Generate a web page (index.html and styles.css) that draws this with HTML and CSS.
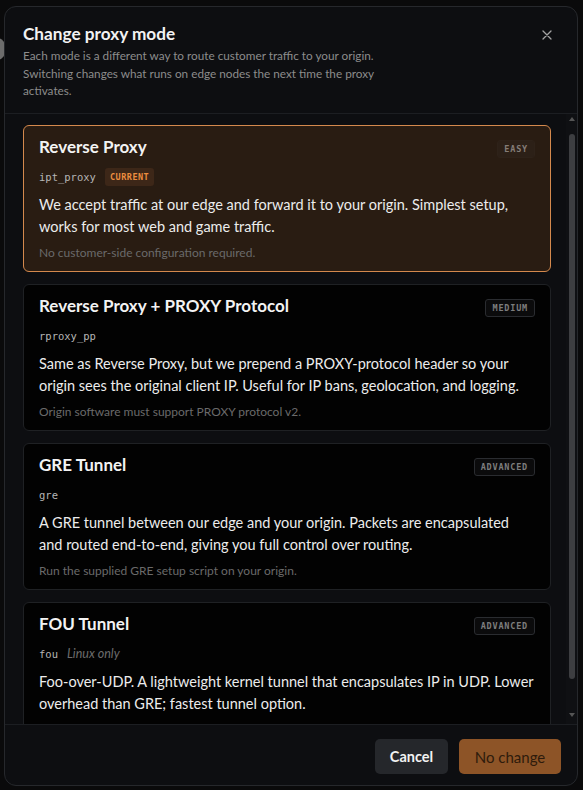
FILE: index.html
```html
<!DOCTYPE html>
<html lang="en">
<head>
  <meta charset="UTF-8" />
  <meta name="viewport" content="width=device-width, initial-scale=1.0" />
  <title>Change proxy mode</title>
  <link rel="stylesheet" href="styles.css">
</head>
<body>

  <div class="page-avatar"></div>

  <div class="modal">
    <header class="modal-head">
      <div class="head-text">
        <h2>Change proxy mode</h2>
        <p>Each mode is a different way to route customer traffic to your origin. Switching changes what runs on edge nodes the next time the proxy activates.</p>
      </div>
      <button class="close-btn" aria-label="Close">
        <svg width="10" height="10" viewBox="0 0 10 10"><path d="M1 1L9 9M9 1L1 9" stroke="#a3a3a3" stroke-width="1.3" stroke-linecap="round"/></svg>
      </button>
    </header>

    <div class="modal-body">
      <div class="mode-list">

        <div class="mode-card selected">
          <div class="mode-top">
            <h3>Reverse Proxy</h3>
            <span class="level level-easy">EASY</span>
          </div>
          <div class="mode-code">
            <code>ipt_proxy</code>
            <span class="current">CURRENT</span>
          </div>
          <p class="mode-desc">We accept traffic at our edge and forward it to your origin. Simplest setup, works for most web and game traffic.</p>
          <p class="mode-note">No customer-side configuration required.</p>
        </div>

        <div class="mode-card">
          <div class="mode-top">
            <h3>Reverse Proxy + PROXY Protocol</h3>
            <span class="level">MEDIUM</span>
          </div>
          <div class="mode-code">
            <code>rproxy_pp</code>
          </div>
          <p class="mode-desc">Same as Reverse Proxy, but we prepend a PROXY-protocol header so your origin sees the original client IP. Useful for IP bans, geolocation, and logging.</p>
          <p class="mode-note">Origin software must support PROXY protocol v2.</p>
        </div>

        <div class="mode-card">
          <div class="mode-top">
            <h3>GRE Tunnel</h3>
            <span class="level">ADVANCED</span>
          </div>
          <div class="mode-code">
            <code>gre</code>
          </div>
          <p class="mode-desc">A GRE tunnel between our edge and your origin. Packets are encapsulated and routed end-to-end, giving you full control over routing.</p>
          <p class="mode-note">Run the supplied GRE setup script on your origin.</p>
        </div>

        <div class="mode-card">
          <div class="mode-top">
            <h3>FOU Tunnel</h3>
            <span class="level">ADVANCED</span>
          </div>
          <div class="mode-code">
            <code>fou</code>
            <span class="os-note">Linux only</span>
          </div>
          <p class="mode-desc">Foo-over-UDP. A lightweight kernel tunnel that encapsulates IP in UDP. Lower overhead than GRE; fastest tunnel option.</p>
        </div>

      </div>

      <div class="scrollbar">
        <span class="arrow arrow-up"></span>
        <span class="thumb"></span>
        <span class="arrow arrow-down"></span>
      </div>
    </div>

    <footer class="modal-foot">
      <button class="btn btn-cancel">Cancel</button>
      <button class="btn btn-confirm">No change</button>
    </footer>
  </div>

</body>
</html>
```

FILE: styles.css
```css
* {
  box-sizing: border-box;
}

body {
  margin: 0;
  height: 790px;
  padding: 6px 5px 4px 4px;
  background: #0a0a0b;
  font-family: Lato, "Noto Sans", sans-serif;
  color: #e8e8e8;
  overflow: hidden;
}

/* faint page content behind the overlay */
.page-avatar {
  position: absolute;
  left: -12px;
  top: 38px;
  width: 18px;
  height: 22px;
  border-radius: 50%;
  background: #6c6c6c;
}

.modal {
  position: relative;
  height: 780px;
  display: flex;
  flex-direction: column;
  background: #0d0e11;
  border: 1px solid #26282c;
  border-radius: 12px;
  overflow: hidden;
}

.modal-head {
  display: flex;
  justify-content: space-between;
  align-items: flex-start;
  padding: 15px 18px 13px 18px;
  border-bottom: 1px solid #1c1e22;
}

.modal-head h2 {
  margin: 0;
  font-size: 17.2px;
  line-height: 24px;
  font-weight: 700;
  color: #f2f2f2;
}

.modal-head p {
  margin: 1px 0 0;
  max-width: 364px;
  font-size: 11.75px;
  line-height: 17.5px;
  color: #8c8c8c;
}

.close-btn {
  width: 24px;
  height: 24px;
  margin-top: 1px;
  padding: 0;
  border: none;
  background: none;
  display: flex;
  align-items: center;
  justify-content: center;
}

.modal-body {
  flex: 1;
  min-height: 0;
  display: flex;
}

.mode-list {
  flex: 1;
  overflow: hidden;
  display: flex;
  flex-direction: column;
  gap: 12px;
  padding: 11px 15px 0 18px;
}

.mode-card {
  flex-shrink: 0;
  min-height: 147px;
  padding: 10px 15px 9px 15px;
  background: #020202;
  border: 1px solid #1f2124;
  border-radius: 6px;
}

.mode-card.selected {
  background: #291c12;
  border-color: #d4894d;
}

.mode-top {
  display: flex;
  justify-content: space-between;
  align-items: center;
  height: 22px;
}

.mode-top h3 {
  margin: 0;
  font-size: 17px;
  font-weight: 700;
  color: #f3f3f3;
}

.level {
  margin-top: 4px;
  padding: 0 6px;
  height: 18px;
  line-height: 17px;
  font-family: "DejaVu Sans Mono", monospace;
  font-size: 8.5px;
  letter-spacing: 0.8px;
  font-weight: 700;
  color: #7d7d7d;
  background: #0b0b0c;
  border: 1px solid #2a2c30;
  border-radius: 3px;
}

.level-easy {
  background: #2c2017;
  border-color: #2e2219;
  color: #857d77;
}

.mode-code {
  display: flex;
  align-items: center;
  gap: 9px;
  height: 18px;
  margin-top: 10px;
}

.mode-code code {
  font-family: "DejaVu Sans Mono", monospace;
  font-size: 10.5px;
  color: #b5b5b5;
}

.current {
  padding: 0 5px;
  height: 18px;
  line-height: 18px;
  font-family: "DejaVu Sans Mono", monospace;
  font-size: 8.5px;
  font-weight: 700;
  letter-spacing: 0.5px;
  color: #ec8d3f;
  background: #3d2718;
  border-radius: 3px;
}

.os-note {
  font-size: 12.5px;
  font-style: italic;
  color: #6c6c6c;
}

.mode-desc {
  margin: 8px 0 0;
  font-size: 14.5px;
  line-height: 22px;
  color: #ececec;
}

.mode-note {
  margin: 7px 0 0;
  font-size: 12px;
  line-height: 16px;
  color: #6a6a6a;
}

.scrollbar {
  width: 11px;
  display: flex;
  flex-direction: column;
  align-items: center;
  padding-top: 3px;
  background: #0f1013;
}

.arrow {
  width: 0;
  height: 0;
  border-left: 3px solid transparent;
  border-right: 3px solid transparent;
}

.arrow-up {
  border-bottom: 4px solid #555;
}

.arrow-down {
  margin-top: 34px;
  border-top: 4px solid #555;
}

.thumb {
  width: 6px;
  height: 545px;
  margin-top: 13px;
  border-radius: 3px;
  background: #3d3e41;
}

.modal-foot {
  display: flex;
  justify-content: flex-end;
  gap: 11px;
  padding: 14px 16px 11px;
  border-top: 1px solid #1c1e22;
}

.btn {
  height: 35px;
  border: none;
  border-radius: 5px;
  font-family: Lato, "Noto Sans", sans-serif;
  cursor: pointer;
}

.btn-cancel {
  width: 73px;
  background: #25272b;
  color: #f2f2f2;
  font-size: 14.5px;
  font-weight: 700;
}

.btn-confirm {
  width: 102px;
  background: #8d5427;
  color: #2e1b0c;
  font-size: 15px;
}
```
